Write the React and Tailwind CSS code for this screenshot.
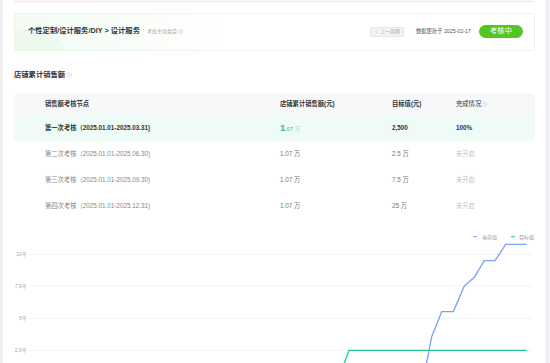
import { CircleHelp, ChevronLeft } from "lucide-react";

const rows = [
    { name: "第二次考核（2025.01.01-2025.06.30)", value: "1.07 万", target: "2.5 万" },
    { name: "第三次考核（2025.01.01-2025.09.30)", value: "1.07 万", target: "7.5 万" },
    { name: "第四次考核（2025.01.01-2025.12.31)", value: "1.07 万", target: "25 万" },
];

const grid = [
    { y: 35.3, label: "10千" },
    { y: 67, label: "7.5千" },
    { y: 99.3, label: "5千" },
    { y: 131.3, label: "2.5千" },
];

const current = "422.5,150 428.7,117.7 438.7,92.7 450.3,92.7 461.3,67 471.3,58.3 481.3,41.7 492,41.7 502.7,25.3 523.7,25.3";
const target = "339,150 346,131.3 523.7,131.3";

const Chart = () => (
    <svg width="543" height="144" className="block">
        {grid.map(g => (
            <g key={g.label}>
                <line x1="27" x2="529" y1={g.y} y2={g.y} stroke="#efeff2" strokeWidth="0.8" />
                <text x="23.7" y={g.y + 1.8} textAnchor="end" fontSize="5" fill="#a8a8a8">{g.label}</text>
            </g>
        ))}
        {/* Legend */}
        <line x1="470.3" x2="474" y1="17.7" y2="17.7" stroke="#7aa3f8" strokeWidth="1" />
        <text x="479" y="19.5" fontSize="5" fill="#999">当前值</text>
        <line x1="508" x2="512" y1="17.7" y2="17.7" stroke="#21c98a" strokeWidth="1" />
        <text x="516" y="19.5" fontSize="5" fill="#999">目标值</text>
        <polyline points={target} fill="none" stroke="#21c98a" strokeWidth="1.3" strokeLinejoin="round" />
        <polyline points={current} fill="none" stroke="#78a1f7" strokeWidth="1.3" strokeLinejoin="round" />
    </svg>
);

const App = () => {
    return (
        <div className="w-[550px] h-[363px] overflow-hidden flex bg-white font-['Liberation_Sans','Noto_Sans_CJK_SC',sans-serif]">
            <div className="w-[3px] bg-[#efeff4]" />
            <div className="flex-1 flex flex-col">
                <div className="px-[11px]">
                    {/* Card above, cut off */}
                    <div className="h-[2px] bg-[#fff6f6] border-b border-[#fbe4e4] rounded-b-[3px]" />

                    {/* Category card */}
                    <div className="relative overflow-hidden mt-[10.5px] h-[38.5px] rounded-[3px] border border-[#e8f6e8] bg-gradient-to-r from-[#f3fbf3] via-white via-40% to-white flex items-center pl-[13px] pr-[11px]">
                        <div className="absolute left-[-22px] top-[14px] w-[78px] h-[78px] rounded-full bg-[#e9f8e9]/60" />
                        <div className="relative flex items-center flex-1">
                            <span className="text-[7.3px] font-bold text-[#333]">个性定制/设计服务/DIY &gt; 设计服务</span>
                            <span className="ml-[7px] flex items-center gap-[1px] text-[5px] text-[#a5a5a5]">
                                考核主营类目<CircleHelp size={5} strokeWidth={1.5} />
                            </span>
                        </div>
                        <div className="relative flex items-center">
                            <button className="w-[34px] h-[10px] flex items-center justify-center gap-[1px] bg-[#f3f3f3] border border-[#e6e6e6] rounded-[1px] text-[5px] text-[#aaa]">
                                <ChevronLeft size={5} strokeWidth={2} />上一周期
                            </button>
                            <span className="ml-[12px] text-[5.3px] text-[#555]">数据更新于 2025-02-17</span>
                            <span className="ml-[8px] w-[44px] h-[13px] rounded-full bg-[#55c424] text-white text-[7.3px] flex items-center justify-center">考核中</span>
                        </div>
                    </div>

                    {/* Section heading */}
                    <div className="mt-[19px] h-[10px] flex items-center gap-[1px] text-[7.3px] font-bold text-[#333]">
                        店铺累计销售额<CircleHelp size={6} strokeWidth={1.5} className="text-[#c0c0c0]" />
                    </div>

                    {/* Table */}
                    <div className="mt-[13px] text-[6.3px]">
                        <div className="grid grid-cols-[266px_112px_64px_1fr] h-[22px] items-center bg-[#f7f8fa] rounded-t-[4px] font-semibold text-[#333]">
                            <div className="pl-[31px]">销售额考核节点</div>
                            <div>店铺累计销售额(元)</div>
                            <div>目标值(元)</div>
                            <div className="flex items-center gap-[1px] font-normal">完成情况<CircleHelp size={5} strokeWidth={1.5} className="text-[#bbb]" /></div>
                        </div>
                        <div className="grid grid-cols-[266px_112px_64px_1fr] h-[26px] items-center bg-[#effbf6] rounded-b-[4px] font-semibold text-[#333]">
                            <div className="pl-[31px]">第一次考核（2025.01.01-2025.03.31)</div>
                            <div className="flex items-baseline text-[#22c48c]">
                                <span className="text-[9.5px] font-bold">1</span>
                                <span className="text-[5.5px] font-normal">.07</span>
                                <span className="ml-[1.5px] text-[5.5px] font-normal text-[#9adfc4]">万</span>
                            </div>
                            <div>2,500</div>
                            <div>100%</div>
                        </div>
                        {rows.map(r => (
                            <div key={r.name} className="grid grid-cols-[266px_112px_64px_1fr] h-[26px] items-center text-[#888]">
                                <div className="pl-[31px]">{r.name}</div>
                                <div className="text-[#777]">{r.value}</div>
                                <div className="text-[#777]">{r.target}</div>
                                <div className="text-[#c4c4c4]">未开启</div>
                            </div>
                        ))}
                    </div>
                </div>

                <Chart />
            </div>
            <div className="w-[4px] bg-[#f3f3f6] border-l border-[#e7e7ed]" />
        </div>
    );
};

export default App;
